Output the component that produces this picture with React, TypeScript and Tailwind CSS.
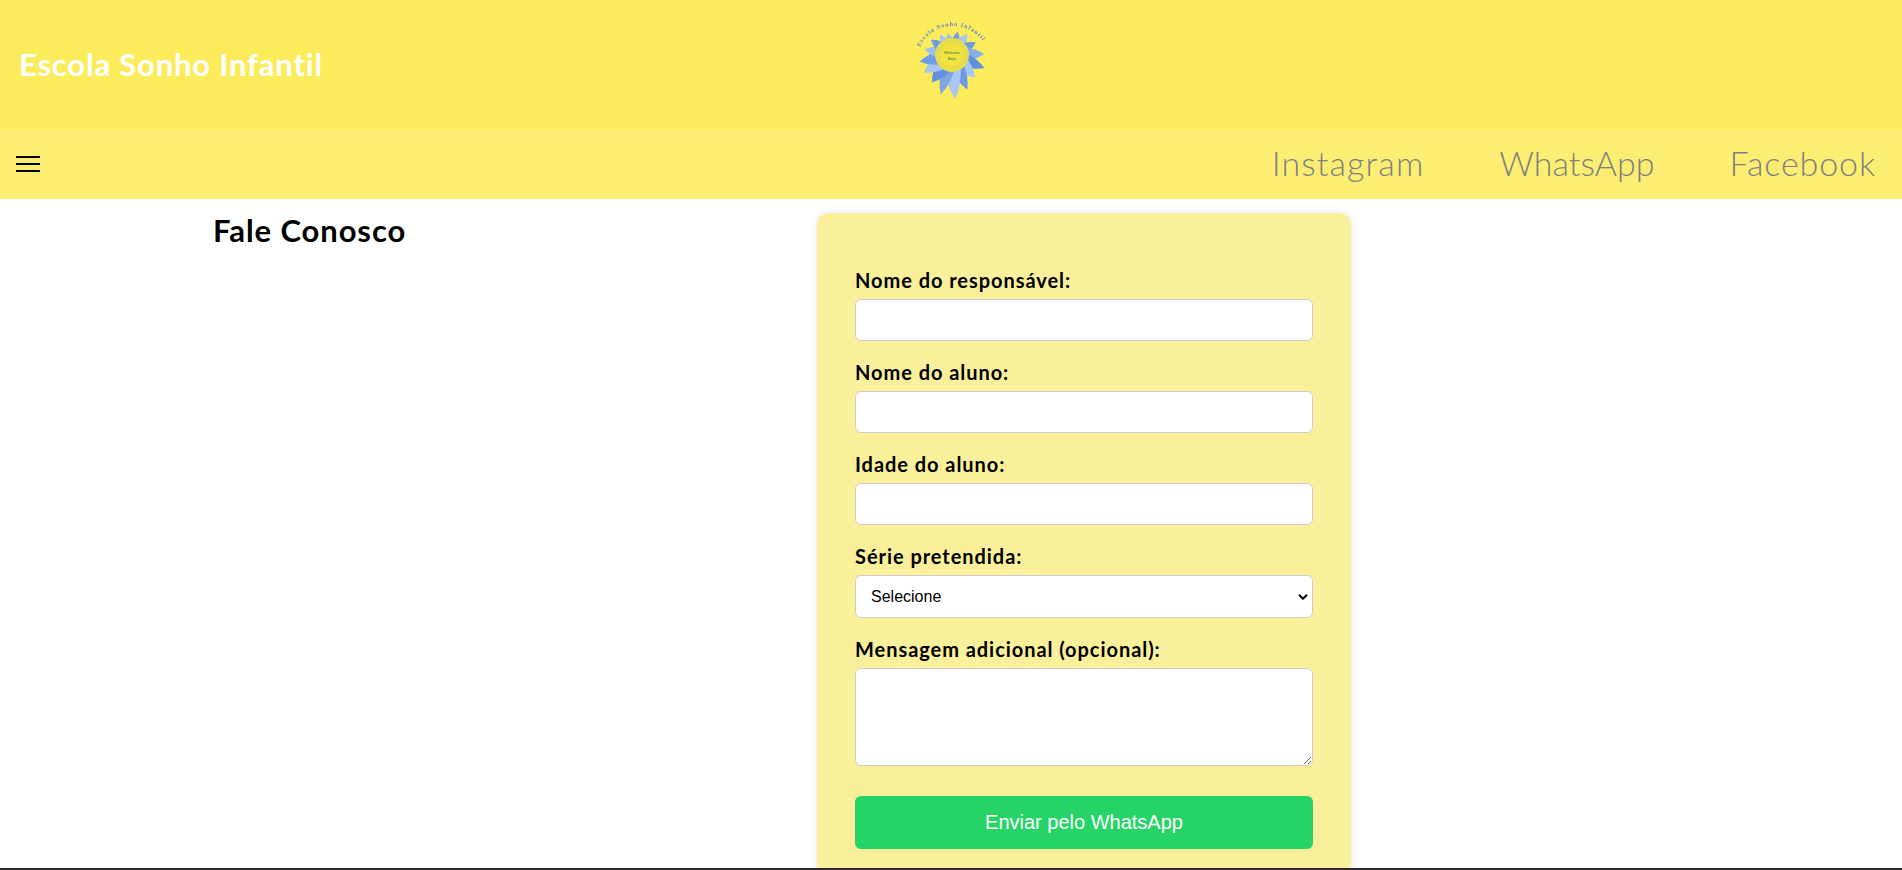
import { ChevronDown } from "lucide-react";

// angle, length and width of each petal of the sunflower
const petals: [number, number, number, string][] = [
  [-10, 22, 5, "#9dbdf0"],
  [14, 24, 5, "#6d9be6"],
  [36, 26, 6, "#a9c6f2"],
  [62, 27, 6, "#6d9be6"],
  [88, 32, 7, "#86aeea"],
  [112, 35, 7, "#5f90e0"],
  [134, 32, 8, "#a9c6f2"],
  [156, 38, 7, "#6d9be6"],
  [176, 44, 8, "#a9c6f2"],
  [196, 41, 7, "#7fa6e0"],
  [216, 34, 8, "#5f90e0"],
  [238, 33, 8, "#a9c6f2"],
  [258, 33, 7, "#6d9be6"],
  [282, 28, 6, "#9dbdf0"],
  [306, 26, 6, "#6d9be6"],
  [330, 24, 5, "#a9c6f2"],
];

function Logo() {
  return (
    <svg width="72" height="80" viewBox="0 0 72 80" aria-label="Escola Sonho Infantil">
      <defs>
        <path id="logo-arc" d="M3 27 A 36.4 36.4 0 0 1 69 27" />
        <filter id="logo-blur" x="-20%" y="-20%" width="140%" height="140%">
          <feGaussianBlur stdDeviation="0.4" />
        </filter>
      </defs>
      <g filter="url(#logo-blur)">
        <g transform="translate(35 35)">
          {petals.map(([a, len, w, color]) => (
            <path
              key={a}
              d={`M${-w} -8 Q${-w} ${-len * 0.7} 0 ${-len} Q${w} ${-len * 0.7} ${w} -8 Z`}
              fill={color}
              transform={`rotate(${a})`}
            />
          ))}
          <circle r="17" fill="#e3dd4e" />
          <circle r="12" fill="#f0e33f" />
          <text y="-1.5" textAnchor="middle" fontSize="3.6" fontWeight="700" fill="#6f8a4a" fontFamily="'Liberation Sans', sans-serif">Welcome</text>
          <text y="4.5" textAnchor="middle" fontSize="3.6" fontWeight="700" fill="#6f8a4a" fontFamily="'Liberation Sans', sans-serif">Days</text>
        </g>
        <text fontSize="6" fontWeight="700" fill="#5b86c9" fontFamily="'Liberation Serif', serif" letterSpacing="1">
          <textPath href="#logo-arc">Escola Sonho Infantil</textPath>
        </text>
      </g>
    </svg>
  );
}

function Field({ label, children }: { label: string; children: React.ReactNode }) {
  return (
    <div className="mb-[20px]">
      <label className="block mb-[8px] text-[20px] leading-[22px] font-bold tracking-[0.95px] text-black">{label}</label>
      {children}
    </div>
  );
}

const inputClass =
  "block w-full bg-white border border-[#cccccc] rounded-[6px] outline-none";

export default function App() {
  return (
    <div className="h-[870px] overflow-hidden flex flex-col bg-white font-['Lato','Noto_Sans',sans-serif]">
      <header className="h-[129px] shrink-0 bg-[#fcec5c] flex items-start pl-[19px]">
        <h1 className="w-[898px] mt-[45px] text-[31px] leading-[38px] font-bold tracking-[0.8px] text-white">Escola Sonho Infantil</h1>
        <div className="mt-[20px]">
          <Logo />
        </div>
      </header>

      <nav className="h-[70px] shrink-0 bg-[#fbee72] flex items-center justify-between pl-[16px] pr-[26px]">
        <button type="button" aria-label="Menu" className="flex flex-col gap-[5px] w-[24px]">
          <span className="block h-[2px] bg-black" />
          <span className="block h-[2px] bg-black" />
          <span className="block h-[2px] bg-black" />
        </button>
        <div className="flex items-center gap-[75px] text-[34px] leading-[40px] font-light text-[#808080]">
          <a className="tracking-[1.1px] mb-[2px]">Instagram</a>
          <a className="mb-[2px]">WhatsApp</a>
          <a className="tracking-[0.9px] mb-[2px]">Facebook</a>
        </div>
      </nav>

      <main className="flex-1 min-h-0 overflow-hidden flex items-start pl-[213px]">
        <h2 className="w-[604px] shrink-0 mt-[13px] text-[31px] leading-[36px] font-bold tracking-[0.9px] text-black">Fale Conosco</h2>
        <form className="w-[534px] shrink-0 mt-[14px] px-[38px] pt-[56px] pb-[40px] bg-[#faf09b] rounded-[12px] shadow-[0_0_10px_rgba(0,0,0,0.1)]">
          <Field label="Nome do responsável:">
            <input type="text" className={`${inputClass} h-[42px]`} />
          </Field>
          <Field label="Nome do aluno:">
            <input type="text" className={`${inputClass} h-[42px]`} />
          </Field>
          <Field label="Idade do aluno:">
            <input type="text" className={`${inputClass} h-[42px]`} />
          </Field>
          <Field label="Série pretendida:">
            <div className="relative">
              <select className={`${inputClass} h-[43px] appearance-none pl-[15px] text-[16px] text-black font-['Liberation_Sans',sans-serif]`}>
                <option>Selecione</option>
              </select>
              <ChevronDown size={14} strokeWidth={3.2} className="absolute right-[3px] top-[15px] text-black pointer-events-none" />
            </div>
          </Field>
          <Field label="Mensagem adicional (opcional):">
            <textarea className={`${inputClass} h-[98px]`} />
          </Field>
          <button
            type="button"
            className="block w-full h-[53px] mt-[30px] pb-[2px] bg-[#25d366] rounded-[6px] text-white text-[20px] font-['Liberation_Sans',sans-serif]"
          >
            Enviar pelo WhatsApp
          </button>
        </form>
      </main>

      <div className="h-[2px] shrink-0 bg-[#2b2b2b]" />
    </div>
  );
}
